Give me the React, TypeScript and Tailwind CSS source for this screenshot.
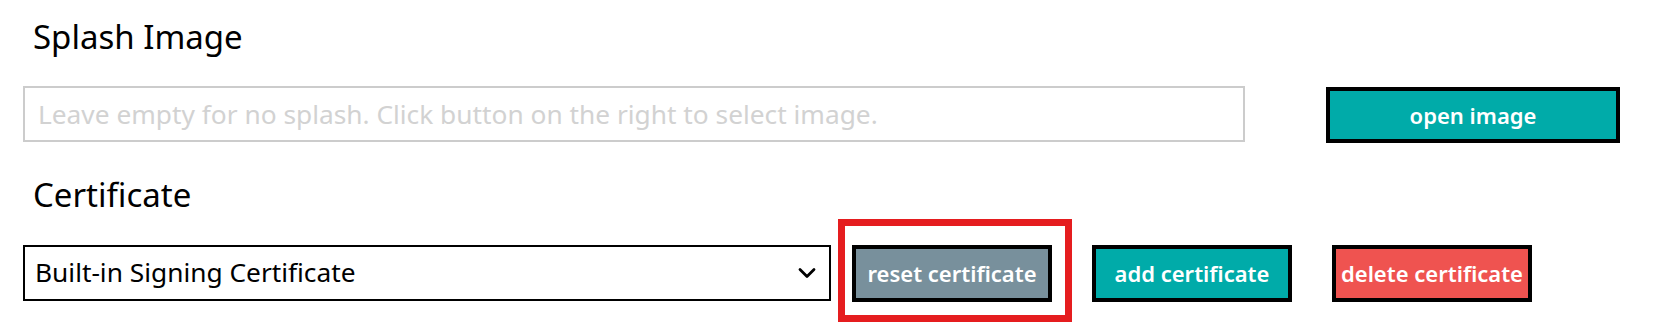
import { ChevronDown } from "lucide-react";

const font = { fontFamily: '"Noto Sans", "Open Sans", sans-serif' };

function ActionButton({ label, color }: { label: string; color: string }) {
  return (
    <button
      className={`flex h-[57px] w-[200px] items-center justify-center border-4 border-black text-[22px] font-semibold text-white ${color}`}
    >
      {label}
    </button>
  );
}

export default function App() {
  return (
    <div className="h-[332px] w-[1670px] bg-white px-[23px] text-black" style={font}>
      {/* Splash image */}
      <h2 className="pt-[15px] pl-[10px] text-[33px] leading-[44px]">Splash Image</h2>
      <div className="mt-[27px] flex items-start">
        <input
          className="h-[56px] w-[1222px] border-2 border-[#cccccc] px-[13px] text-[26.3px] outline-none placeholder:text-[#d2d2d2]"
          placeholder="Leave empty for no splash. Click button on the right to select image."
        />
        <button className="ml-[81px] mt-px flex h-[56px] w-[294px] items-center justify-center border-4 border-black bg-[#00aba9] text-[22px] font-semibold text-white">
          open image
        </button>
      </div>

      {/* Certificate */}
      <h2 className="mt-[30px] pl-[10px] text-[33px] leading-[44px]">Certificate</h2>
      <div className="mt-[28px] flex items-start">
        <div className="flex h-[56px] w-[808px] items-center justify-between border-2 border-black pl-[10px] pr-[8px]">
          <span className="text-[26.3px]">Built-in Signing Certificate</span>
          <ChevronDown size={28} strokeWidth={2.4} />
        </div>
        <div className="relative ml-[21px]">
          <ActionButton label="reset certificate" color="bg-[#78909c]" />
          <span className="pointer-events-none absolute -left-[14px] -top-[26px] h-[103px] w-[234px] border-[7px] border-[#e51d1f]" />
        </div>
        <div className="ml-[40px]">
          <ActionButton label="add certificate" color="bg-[#00aba9]" />
        </div>
        <div className="ml-[40px]">
          <ActionButton label="delete certificate" color="bg-[#ef5350]" />
        </div>
      </div>
    </div>
  );
}
